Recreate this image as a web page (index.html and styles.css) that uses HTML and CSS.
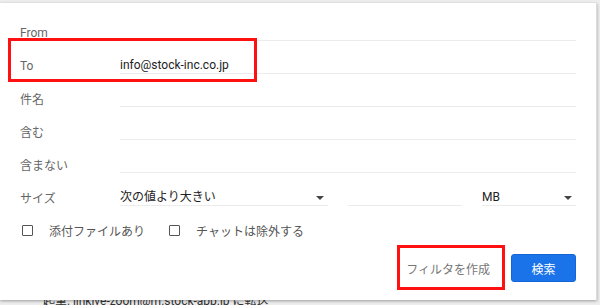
FILE: index.html
```html
<!DOCTYPE html>
<html lang="ja">
<head>
    <meta charset="UTF-8">
    <meta name="viewport" content="width=device-width, initial-scale=1.0">
    <title>検索フィルタ</title>
    <link rel="stylesheet" href="styles.css">
</head>
<body>
    <div class="page-line">起筆: linkive-zoom@m.stock-app.jp に転送</div>

    <div class="search-panel">
        <div class="field-row">
            <label class="field-label">From</label>
            <div class="field-input"></div>
        </div>
        <div class="field-row">
            <label class="field-label">To</label>
            <div class="field-input">info@stock-inc.co.jp</div>
        </div>
        <div class="field-row">
            <label class="field-label">件名</label>
            <div class="field-input"></div>
        </div>
        <div class="field-row">
            <label class="field-label">含む</label>
            <div class="field-input"></div>
        </div>
        <div class="field-row">
            <label class="field-label">含まない</label>
            <div class="field-input"></div>
        </div>
        <div class="field-row">
            <label class="field-label">サイズ</label>
            <div class="size-fields">
                <div class="field-input select size-op">次の値より大きい<span class="caret"></span></div>
                <div class="field-input size-num"></div>
                <div class="field-input select size-unit">MB<span class="caret"></span></div>
            </div>
        </div>

        <div class="check-row">
            <label class="check"><span class="check-box"></span>添付ファイルあり</label>
            <label class="check"><span class="check-box"></span>チャットは除外する</label>
        </div>

        <div class="button-row">
            <button class="btn-text">フィルタを作成</button>
            <button class="btn-primary">検索</button>
        </div>

        <div class="mark mark-to"></div>
        <div class="mark mark-filter"></div>
    </div>
</body>
</html>
```

FILE: styles.css
```css
body {
    margin: 0;
    padding: 0;
    width: 600px;
    height: 305px;
    overflow: hidden;
    background: #eeeeee;
    font-family: Roboto, "Noto Sans CJK JP", sans-serif;
    font-size: 12px;
    position: relative;
}

.page-line {
    padding: 293px 0 0 43px;
    color: #333;
    font-size: 12px;
    line-height: 16px;
}

.search-panel {
    position: absolute;
    top: 3px;
    left: 0;
    width: 597px;
    height: 297px;
    box-sizing: border-box;
    padding: 13px 20px 0 20px;
    background: #fff;
    border-right: 1px solid #dcdcdc;
    box-shadow: 0 1px 3px rgba(0, 0, 0, 0.35);
    z-index: 2;
}

.field-row {
    display: flex;
    align-items: center;
    height: 33px;
}

.field-label {
    width: 100px;
    flex: none;
    color: #666;
}

.field-input {
    flex: 1;
    height: 16px;
    line-height: 16px;
    border-bottom: 1px solid #ececec;
    color: #222;
    position: relative;
}

.size-fields {
    flex: 1;
    display: flex;
    gap: 20px;
}

.size-op {
    flex: 0 0 208px;
}

.size-num {
    flex: 0 0 114px;
}

.size-unit {
    flex: 1;
}

.caret {
    position: absolute;
    right: 4px;
    top: 7px;
    width: 0;
    height: 0;
    border-left: 4px solid transparent;
    border-right: 4px solid transparent;
    border-top: 4px solid #444;
}

.check-row {
    display: flex;
    align-items: center;
    height: 33px;
    padding-left: 2px;
    gap: 24px;
}

.check {
    display: flex;
    align-items: center;
    color: #555;
}

.check-box {
    width: 9px;
    height: 9px;
    border: 1.5px solid #555;
    border-radius: 1px;
    margin-right: 16px;
}

.button-row {
    display: flex;
    justify-content: flex-end;
    align-items: center;
    margin-top: 7px;
}

.btn-text {
    height: 28px;
    padding: 0 8px;
    margin-right: 13px;
    border: none;
    background: none;
    color: #777;
    font-family: inherit;
    font-size: 12px;
}

.btn-primary {
    width: 65px;
    height: 28px;
    border: 1px solid #1565d8;
    border-radius: 3px;
    background: #1a73e8;
    color: #fff;
    font-family: inherit;
    font-size: 12px;
}

.mark {
    position: absolute;
    border: 3px solid #f11;
}

.mark-to {
    left: 8px;
    top: 35px;
    width: 243px;
    height: 38px;
}

.mark-filter {
    left: 397px;
    top: 242px;
    width: 102px;
    height: 39px;
}
```
